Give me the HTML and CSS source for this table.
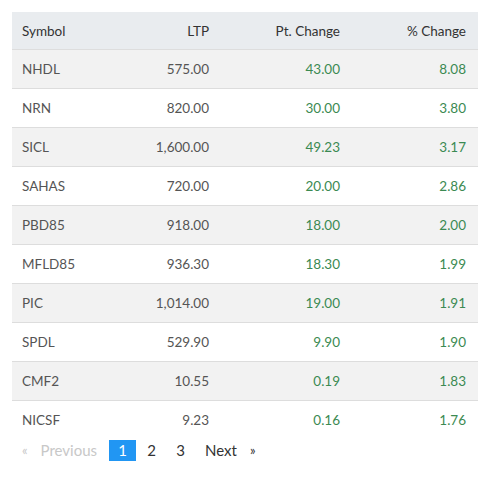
FILE: index.html
```html
<!DOCTYPE html>
<html lang="en">
	<head>
		<title>Top Gainers</title>
		<meta charset="utf-8">
		<link rel="stylesheet" href="styles.css">
	</head>
	<body>
		<table class="stocks">
			<thead>
				<tr>
					<th class="sym">Symbol</th>
					<th class="ltp">LTP</th>
					<th class="pt">Pt. Change</th>
					<th class="pc">% Change</th>
				</tr>
			</thead>
			<tbody>
				<tr><td>NHDL</td><td class="num">575.00</td><td class="up">43.00</td><td class="up">8.08</td></tr>
				<tr><td>NRN</td><td class="num">820.00</td><td class="up">30.00</td><td class="up">3.80</td></tr>
				<tr><td>SICL</td><td class="num">1,600.00</td><td class="up">49.23</td><td class="up">3.17</td></tr>
				<tr><td>SAHAS</td><td class="num">720.00</td><td class="up">20.00</td><td class="up">2.86</td></tr>
				<tr><td>PBD85</td><td class="num">918.00</td><td class="up">18.00</td><td class="up">2.00</td></tr>
				<tr><td>MFLD85</td><td class="num">936.30</td><td class="up">18.30</td><td class="up">1.99</td></tr>
				<tr><td>PIC</td><td class="num">1,014.00</td><td class="up">19.00</td><td class="up">1.91</td></tr>
				<tr><td>SPDL</td><td class="num">529.90</td><td class="up">9.90</td><td class="up">1.90</td></tr>
				<tr><td>CMF2</td><td class="num">10.55</td><td class="up">0.19</td><td class="up">1.83</td></tr>
				<tr><td>NICSF</td><td class="num">9.23</td><td class="up">0.16</td><td class="up">1.76</td></tr>
			</tbody>
		</table>

		<div class="pager">
			<span class="off first">&laquo;</span>
			<span class="off">Previous</span>
			<span class="page active">1</span>
			<span class="page">2</span>
			<span class="page">3</span>
			<span class="link">Next</span>
			<span class="link arrow">&raquo;</span>
		</div>
	</body>
</html>
```

FILE: styles.css
```css
body {
	margin: 0;
	padding: 12px 15px 12px 12px;
	background-color: #ffffff;
	font-family: "Lato", "Liberation Sans", sans-serif;
	font-size: 13.5px;
	color: #555555;
}
.stocks {
	width: 466px;
	border-collapse: collapse;
}
.stocks th {
	background-color: #e9ecef;
	color: #333333;
	font-weight: normal;
	height: 37px;
	padding: 0 12px 0 10px;
	text-align: right;
}
.stocks th.sym {
	text-align: left;
	width: 86px;
}
.stocks th.ltp {
	width: 79px;
}
.stocks th.pt {
	width: 109px;
}
.stocks td {
	height: 38px;
	padding: 0 12px 0 10px;
	border-top: 1px solid #dddddd;
	text-align: right;
}
.stocks td:first-child {
	text-align: left;
}
.stocks tbody tr:nth-child(odd) td {
	background-color: #f2f2f2;
}
.stocks .up {
	color: #3b8a52;
}
.pager {
	display: flex;
	align-items: center;
	margin-top: 1px;
	padding-left: 10px;
	font-size: 15px;
	line-height: 21px;
}
.pager .off {
	color: #c8c8c8;
	margin-right: 12px;
}
.pager .first {
	font-size: 13px;
	margin-right: 13px;
}
.pager .page {
	color: #333333;
	width: 27px;
	text-align: center;
	margin-right: 2px;
}
.pager .active {
	background-color: #2196f3;
	color: #ffffff;
}
.pager .link {
	color: #333333;
	margin-left: 9px;
}
.pager .arrow {
	font-size: 13px;
	margin-left: 13px;
}
```
